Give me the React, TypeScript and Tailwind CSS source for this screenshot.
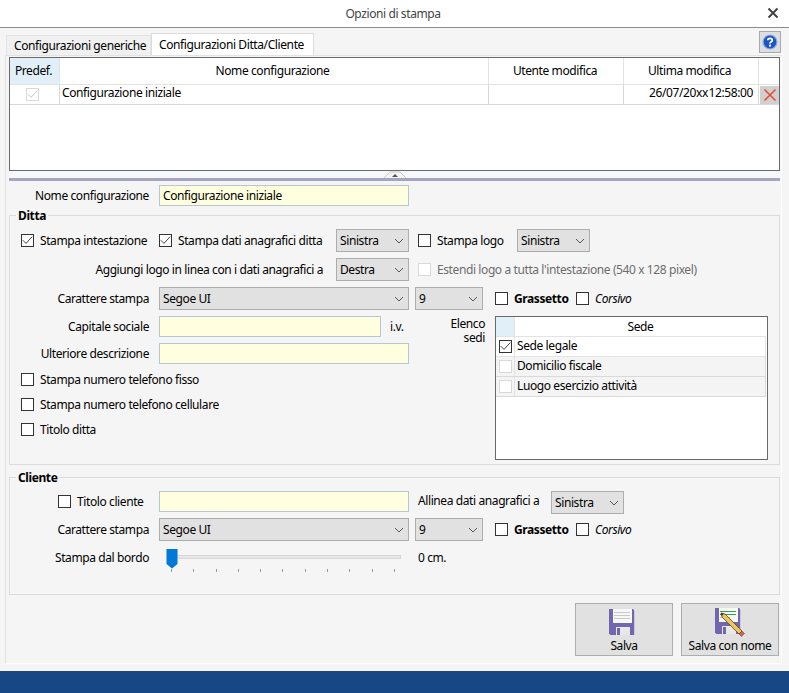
import type { ReactNode } from "react"

function Check({ checked = false, disabled = false }: { checked?: boolean; disabled?: boolean }) {
    return (
        <span className={`flex items-center justify-center w-[13px] h-[13px] shrink-0 border bg-white ${disabled ? "border-[#d9d9d9]" : "border-[#333333]"}`}>
            {checked && (
                <svg width="11" height="11" viewBox="0 0 11 11" fill="none">
                    <path d="M0.8 5.2 L4 8.4 L10.2 1.6" stroke={disabled ? "#c4c4c4" : "#444444"} strokeWidth="1" />
                </svg>
            )}
        </span>
    )
}

function Select({ value, width }: { value: string; width: string }) {
    return (
        <div className={`${width} h-[23px] shrink-0 flex items-center justify-between pl-[3px] pr-[4px] bg-[#e1e1e1] border border-[#adadad]`}>
            <span>{value}</span>
            <svg width="10" height="6" viewBox="0 0 10 6" fill="none">
                <path d="M1 1 L5 5 L9 1" stroke="#555555" strokeWidth="1" />
            </svg>
        </div>
    )
}

function Input({ value = "", width }: { value?: string; width: string }) {
    return <div className={`${width} h-[21px] shrink-0 flex items-center pl-[3px] bg-[#ffffdf] border border-[#b4c7d3]`}>{value}</div>
}

function Label({ children, width }: { children: ReactNode; width: string }) {
    return <div className={`${width} shrink-0 text-right`}>{children}</div>
}

function Floppy({ pencil = false }: { pencil?: boolean }) {
    return (
        <svg width="26" height="26" viewBox="0 0 26 26" className="block">
            <path d="M0 0 H24 L25 1 V26 H1.5 L0 24.5 Z" fill="#7266b0" />
            <rect x="25" y="2" width="1" height="24" fill="#c9c9d6" />
            <rect x="4" y="0" width="19" height="14" fill="#f7f7f7" />
            {pencil ? (
                <g>
                    <rect x="5" y="3" width="16" height="1" fill="#2f9e44" />
                    <rect x="5" y="6" width="16" height="1" fill="#2f9e44" />
                    <rect x="5" y="9" width="10" height="1" fill="#bbbbbb" />
                </g>
            ) : (
                <g fill="#c8c8c8">
                    <rect x="5" y="3" width="16" height="1" />
                    <rect x="5" y="6" width="16" height="1" />
                    <rect x="5" y="9" width="16" height="1" />
                </g>
            )}
            <rect x="7" y="18" width="14" height="8" fill="#e8e8e8" />
            <rect x="8" y="19" width="3" height="7" fill="#7266b0" />
        </svg>
    )
}

function Pencil() {
    return (
        <svg width="25" height="25" viewBox="0 0 25 25" className="absolute left-[5px] top-[4px]">
            <path d="M1 1 L5 2 L22 19 L19 22 L2 5 Z" fill="#efc45a" stroke="#54462a" strokeWidth="0.8" />
            <path d="M19 22 L22 19 L24.5 21.5 L21.5 24.5 Z" fill="#d9605a" stroke="#54462a" strokeWidth="0.5" />
            <path d="M1 1 L4 1.8 L1.8 4 Z" fill="#333333" />
        </svg>
    )
}

export default function App() {
    return (
        <div className="w-[789px] h-[693px] flex flex-col bg-[#f5f5f5] text-[12px] tracking-[-0.4px] text-black overflow-hidden font-['Noto_Sans',sans-serif]">
            <div className="h-[28px] shrink-0 flex items-center justify-center relative bg-white border-b border-[#8c8c8c] text-[#444444] pr-[3px]">
                Opzioni di stampa
                <svg width="12" height="12" viewBox="0 0 12 12" className="absolute right-[10px] top-[7px]">
                    <path d="M1.5 1.5 L10.5 10.5 M10.5 1.5 L1.5 10.5" stroke="#444444" strokeWidth="2" />
                </svg>
            </div>

            <div className="flex-1 flex flex-col pl-[5px] pr-[7px]">
                <div className="h-[27px] shrink-0 flex items-end relative">
                    <div className="h-[20px] w-[145px] pl-[7px] ml-[1px] whitespace-nowrap flex items-center bg-[#f0f0f0] border border-b-0 border-[#e3e3e3]">Configurazioni generiche</div>
                    <div className="h-[22px] w-[163px] pl-[7px] whitespace-nowrap flex items-center bg-white border border-b-0 border-[#dcdcdc]">Configurazioni Ditta/Cliente</div>
                    <div className="absolute right-[1px] top-[3px] w-[22px] h-[22px] flex items-center justify-center bg-[#dedede] border border-[#a9a9a9]">
                        <svg width="16" height="16" viewBox="0 0 16 16">
                            <circle cx="8" cy="8" r="7" fill="#1d56c4" stroke="#8fb0e8" strokeWidth="1.2" />
                            <path d="M5.8 6.2 C5.8 3.7 10.3 3.7 10.3 6.2 C10.3 7.8 8 7.8 8 9.6" fill="none" stroke="white" strokeWidth="1.8" />
                            <rect x="7" y="10.6" width="2" height="2" fill="white" />
                        </svg>
                    </div>
                </div>

                <div className="flex-1 flex flex-col pl-[3px] pr-[1px] border border-[#e3e3e3] border-r-white border-b-white">
                    <div className="h-[114px] mt-[1px] shrink-0 flex flex-col bg-white border border-[#696969]">
                        <div className="h-[27px] shrink-0 flex items-center text-center border-b border-[#e3e3e3]">
                            <div className="w-[50px] h-full flex items-center justify-center bg-[#e1eff8] border-r border-[#e3e3e3] pr-[2px]">Predef.</div>
                            <div className="w-[429px] h-full flex items-center justify-center border-r border-[#e3e3e3] pr-[3px]">Nome configurazione</div>
                            <div className="w-[135px] h-full flex items-center justify-center border-r border-[#e3e3e3] pr-[2px]">Utente modifica</div>
                            <div className="w-[135px] h-full flex items-center justify-center border-r border-[#e3e3e3] pr-[3px]">Ultima modifica</div>
                        </div>
                        <div className="h-[20px] shrink-0 flex items-center border-b border-[#d9d9d9]">
                            <div className="w-[50px] h-full flex items-center justify-center border-r border-[#d9d9d9] pr-[5px]"><Check checked disabled /></div>
                            <div className="w-[429px] h-full flex items-center pl-[2px] pb-[3px] border-r border-[#d9d9d9]">Configurazione iniziale</div>
                            <div className="w-[135px] h-full border-r border-[#d9d9d9]"></div>
                            <div className="w-[135px] h-full flex items-center justify-end pr-[5px] pb-[3px] border-r border-[#d9d9d9] [word-spacing:-2px]">26/07/20xx 12:58:00</div>
                            <div className="w-[19px] h-[18px] ml-[1px] flex items-center justify-center bg-[#d0d0d0]">
                                <svg width="14" height="14" viewBox="0 0 14 14">
                                    <path d="M1.5 1.5 L12.5 12.5 M12.5 1.5 L1.5 12.5" stroke="#e8492f" strokeWidth="1.5" />
                                </svg>
                            </div>
                        </div>
                    </div>

                    <div className="h-[10px] shrink-0 relative bg-[#f5f8fc] border-b-[3px] border-[#a5a5bd]">
                        <svg width="22" height="7" viewBox="0 0 22 7" className="absolute left-[375px] top-0">
                            <path d="M0 7 L6 1 H16 L22 7" fill="#f4f4f4" stroke="#c8c8c8" strokeWidth="1" />
                            <path d="M8 6 L11 3 L14 6 Z" fill="#555555" />
                        </svg>
                    </div>

                    <div className="mt-[4px] flex items-center shrink-0">
                        <Label width="w-[140px]">Nome configurazione</Label>
                        <div className="w-[10px]"></div>
                        <Input value="Configurazione iniziale" width="w-[250px]" />
                    </div>

                    {/* Ditta */}
                    <div className="mt-[9px] h-[250px] shrink-0 relative border border-[#dcdcdc] pl-[11px]">
                        <div className="absolute left-[6px] top-[-8px] px-[2px] font-bold bg-[#f5f5f5] leading-[15px]">Ditta</div>
                        <div className="flex items-center h-[23px] mt-[13px]">
                            <Check checked />
                            <div className="ml-[6px] w-[119px] shrink-0">Stampa intestazione</div>
                            <Check checked />
                            <div className="ml-[6px] w-[158px] shrink-0">Stampa dati anagrafici ditta</div>
                            <Select value="Sinistra" width="w-[73px]" />
                            <div className="ml-[9px]"><Check /></div>
                            <div className="ml-[6px] w-[80px] shrink-0">Stampa logo</div>
                            <Select value="Sinistra" width="w-[73px]" />
                        </div>
                        <div className="flex items-center h-[23px] mt-[6px]">
                            <Label width="w-[302px]">Aggiungi logo in linea con i dati anagrafici a</Label>
                            <div className="ml-[13px]"><Select value="Destra" width="w-[73px]" /></div>
                            <div className="ml-[9px]"><Check disabled /></div>
                            <div className="ml-[6px] text-[#6d6d6d]">Estendi logo a tutta l'intestazione (540 x 128 pixel)</div>
                        </div>
                        <div className="flex items-center h-[23px] mt-[6px]">
                            <Label width="w-[128px]">Carattere stampa</Label>
                            <div className="ml-[10px]"><Select value="Segoe UI" width="w-[250px]" /></div>
                            <div className="ml-[6px]"><Select value="9" width="w-[68px]" /></div>
                            <div className="ml-[12px]"><Check /></div>
                            <div className="ml-[6px] w-[62px] shrink-0 font-bold">Grassetto</div>
                            <Check />
                            <div className="ml-[6px] italic">Corsivo</div>
                        </div>
                        <div className="flex mt-[6px]">
                            <div className="w-[394px] shrink-0 flex flex-col">
                                <div className="flex items-center h-[21px]">
                                    <Label width="w-[128px]">Capitale sociale</Label>
                                    <div className="ml-[10px]"><Input width="w-[222px]" /></div>
                                    <div className="ml-[9px]">i.v.</div>
                                </div>
                                <div className="flex items-center h-[21px] mt-[6px]">
                                    <Label width="w-[128px]">Ulteriore descrizione</Label>
                                    <div className="ml-[10px]"><Input width="w-[250px]" /></div>
                                </div>
                                <div className="flex flex-col gap-[12px] mt-[9px]">
                                    <div className="flex items-center h-[13px]"><Check /><span className="ml-[6px]">Stampa numero telefono fisso</span></div>
                                    <div className="flex items-center h-[13px]"><Check /><span className="ml-[6px]">Stampa numero telefono cellulare</span></div>
                                    <div className="flex items-center h-[13px]"><Check /><span className="ml-[6px]">Titolo ditta</span></div>
                                </div>
                            </div>
                            <div className="w-[70px] shrink-0 text-right leading-[14px] mt-[1px]">Elenco<br />sedi</div>
                            <div className="w-[273px] h-[144px] ml-[10px] shrink-0 bg-white border border-[#696969] pr-[1px]">
                                <div className="h-[20px] flex border-b border-[#e3e3e3]">
                                    <div className="w-[19px] bg-[#e1eff8] border-r border-[#e3e3e3]"></div>
                                    <div className="flex-1 flex items-center justify-center">Sede</div>
                                </div>
                                <div className="h-[20px] flex border-b border-r border-[#e3e3e3]">
                                    <div className="w-[19px] flex items-center justify-center border-r border-[#e3e3e3]"><Check checked /></div>
                                    <div className="flex-1 flex items-center pl-[2px] pb-[2px]">Sede legale</div>
                                </div>
                                <div className="h-[20px] flex bg-[#f4f4f4] border-b border-r border-[#d9d9d9]">
                                    <div className="w-[19px] flex items-center justify-center border-r border-[#e3e3e3]"><Check disabled /></div>
                                    <div className="flex-1 flex items-center pl-[2px] pb-[2px]">Domicilio fiscale</div>
                                </div>
                                <div className="h-[20px] flex bg-[#f4f4f4] border-b border-r border-[#d9d9d9]">
                                    <div className="w-[19px] flex items-center justify-center border-r border-[#e3e3e3]"><Check disabled /></div>
                                    <div className="flex-1 flex items-center pl-[2px] pb-[2px]">Luogo esercizio attività</div>
                                </div>
                            </div>
                        </div>
                    </div>

                    {/* Cliente */}
                    <div className="mt-[12px] h-[118px] shrink-0 relative border border-[#dcdcdc]">
                        <div className="absolute left-[6px] top-[-8px] px-[2px] font-bold bg-[#f5f5f5] leading-[15px]">Cliente</div>
                        <div className="flex items-start h-[23px] mt-[13px]">
                            <div className="ml-[48px] mt-[4px]"><Check /></div>
                            <div className="ml-[6px] w-[82px] shrink-0 mt-[2px]">Titolo cliente</div>
                            <Input width="w-[250px]" />
                            <div className="ml-[9px] w-[133px] shrink-0 mt-[1px]">Allinea dati anagrafici a</div>
                            <Select value="Sinistra" width="w-[73px]" />
                        </div>
                        <div className="flex items-center h-[23px] mt-[4px]">
                            <Label width="w-[139px]">Carattere stampa</Label>
                            <div className="ml-[10px]"><Select value="Segoe UI" width="w-[250px]" /></div>
                            <div className="ml-[6px]"><Select value="9" width="w-[68px]" /></div>
                            <div className="ml-[12px]"><Check /></div>
                            <div className="ml-[6px] w-[62px] shrink-0 font-bold">Grassetto</div>
                            <Check />
                            <div className="ml-[6px] italic">Corsivo</div>
                        </div>
                        <div className="flex items-start mt-[8px]">
                            <Label width="w-[139px]">Stampa dal bordo</Label>
                            <div className="ml-[17px] w-[235px] shrink-0 relative h-[26px]">
                                <div className="absolute left-[4px] right-0 top-[6px] h-[4px] bg-[#e7e7e7] border border-[#d6d6d6]"></div>
                                <svg width="12" height="20" viewBox="0 0 12 20" className="absolute left-0 top-0">
                                    <path d="M0.5 0 H11.5 V15 L6 19.5 L0.5 15 Z" fill="#0078d7" />
                                </svg>
                                <div className="absolute left-[5px] top-[20px] w-[224px] flex justify-between">
                                    {[0, 1, 2, 3, 4, 5, 6, 7, 8, 9, 10].map((i) => (
                                        <div key={i} className="w-[1px] h-[3px] bg-[#9a9a9a]"></div>
                                    ))}
                                </div>
                            </div>
                            <div className="ml-[17px]">0 cm.</div>
                        </div>
                    </div>

                    <div className="flex justify-end gap-[8px] mt-[8px] pr-[1px]">
                        <div className="w-[98px] h-[53px] relative flex flex-col items-center justify-end bg-[#e1e1e1] border border-[#adadad]">
                            <div className="absolute left-[33px] top-[5px]"><Floppy /></div>
                            Salva
                        </div>
                        <div className="w-[98px] h-[53px] relative flex flex-col items-center justify-end bg-[#e1e1e1] border border-[#adadad]">
                            <div className="absolute left-[33px] top-[4px]"><Floppy pencil /><Pencil /></div>
                            Salva con nome
                        </div>
                    </div>
                </div>
                <div className="h-[7px] shrink-0"></div>
            </div>

            <div className="h-[22px] shrink-0 bg-[#174785]"></div>
        </div>
    )
}
